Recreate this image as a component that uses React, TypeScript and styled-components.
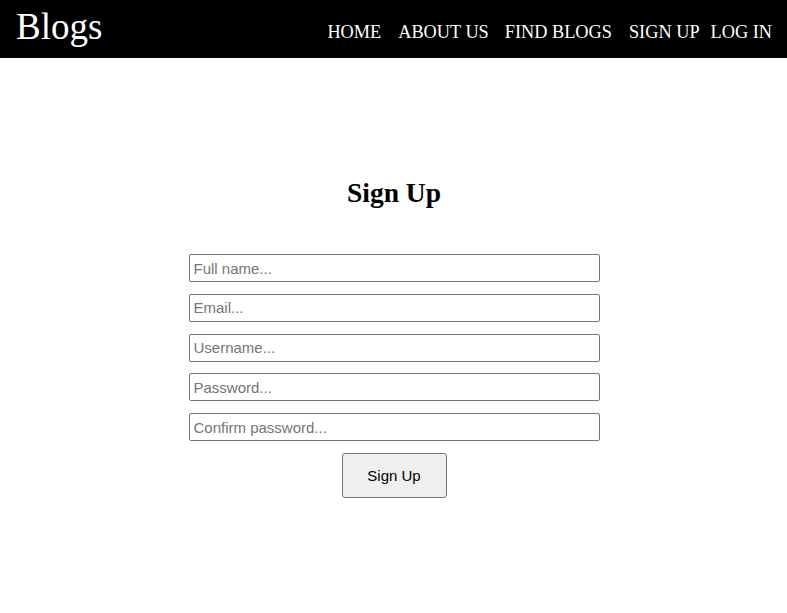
import styled, { createGlobalStyle } from "styled-components";

const GlobalStyle = createGlobalStyle`
  html, body {
    margin: 0;
    padding: 0;
    background: #ffffff;
  }
  body {
    font-family: "Liberation Serif", "Times New Roman", serif;
  }
`;

const links = [
  { label: "HOME", gap: 0 },
  { label: "ABOUT US", gap: 17 },
  { label: "FIND BLOGS", gap: 16 },
  { label: "SIGN UP", gap: 17 },
  { label: "LOG IN", gap: 11 },
];

const fields = [
  { placeholder: "Full name...", type: "text" },
  { placeholder: "Email...", type: "email" },
  { placeholder: "Username...", type: "text" },
  { placeholder: "Password...", type: "password" },
  { placeholder: "Confirm password...", type: "password" },
];

export default function App() {
  return (
    <>
      <GlobalStyle />
      <Header>
        <Brand>Blogs</Brand>
        <Nav>
          {links.map((l) => (
            <NavLink key={l.label} href="#" $gap={l.gap}>
              {l.label}
            </NavLink>
          ))}
        </Nav>
      </Header>
      <Main>
        <Title>Sign Up</Title>
        <Form onSubmit={(e) => e.preventDefault()}>
          {fields.map((f) => (
            <Input key={f.placeholder} type={f.type} placeholder={f.placeholder} />
          ))}
          <SubmitButton type="submit">Sign Up</SubmitButton>
        </Form>
      </Main>
    </>
  );
}

// STYLES

const Header = styled.header`
  display: flex;
  justify-content: space-between;
  align-items: center;
  height: 58px;
  background: #000000;
  color: #ffffff;
  padding: 0 15px 0 16px;
  box-sizing: border-box;
`;

const Brand = styled.div`
  font-family: "Liberation Serif", "Times New Roman", serif;
  font-size: 37px;
  line-height: 1;
  margin-top: -6px;
`;

const Nav = styled.nav`
  display: flex;
  align-items: center;
  margin-top: 6px;
`;

const NavLink = styled.a<{ $gap: number }>`
  font-family: "Liberation Serif", "Times New Roman", serif;
  font-size: 18.3px;
  color: #ffffff;
  text-decoration: none;
  margin-left: ${(p) => p.$gap}px;
`;

const Main = styled.main`
  display: flex;
  flex-direction: column;
  align-items: center;
  padding: 118px 0 0 1px;
`;

const Title = styled.h2`
  font-family: "Liberation Serif", "Times New Roman", serif;
  font-size: 27.5px;
  font-weight: bold;
  margin: 0 0 45px;
  line-height: 1.2;
`;

const Form = styled.form`
  display: flex;
  flex-direction: column;
  align-items: center;
  gap: 11.75px;
`;

const Input = styled.input`
  width: 411px;
  height: 28px;
  box-sizing: border-box;
  border: 1px solid #767676;
  border-radius: 2px;
  padding: 0 4px;
  font-family: "Liberation Sans", Arial, sans-serif;
  font-size: 15px;
  color: #000000;
  &::placeholder {
    color: #757575;
  }
`;

const SubmitButton = styled.button`
  width: 105px;
  height: 45px;
  box-sizing: border-box;
  background: #efefef;
  border: 1px solid #767676;
  border-radius: 3px;
  font-family: "Liberation Sans", Arial, sans-serif;
  font-size: 15px;
  color: #000000;
  cursor: pointer;
`;
